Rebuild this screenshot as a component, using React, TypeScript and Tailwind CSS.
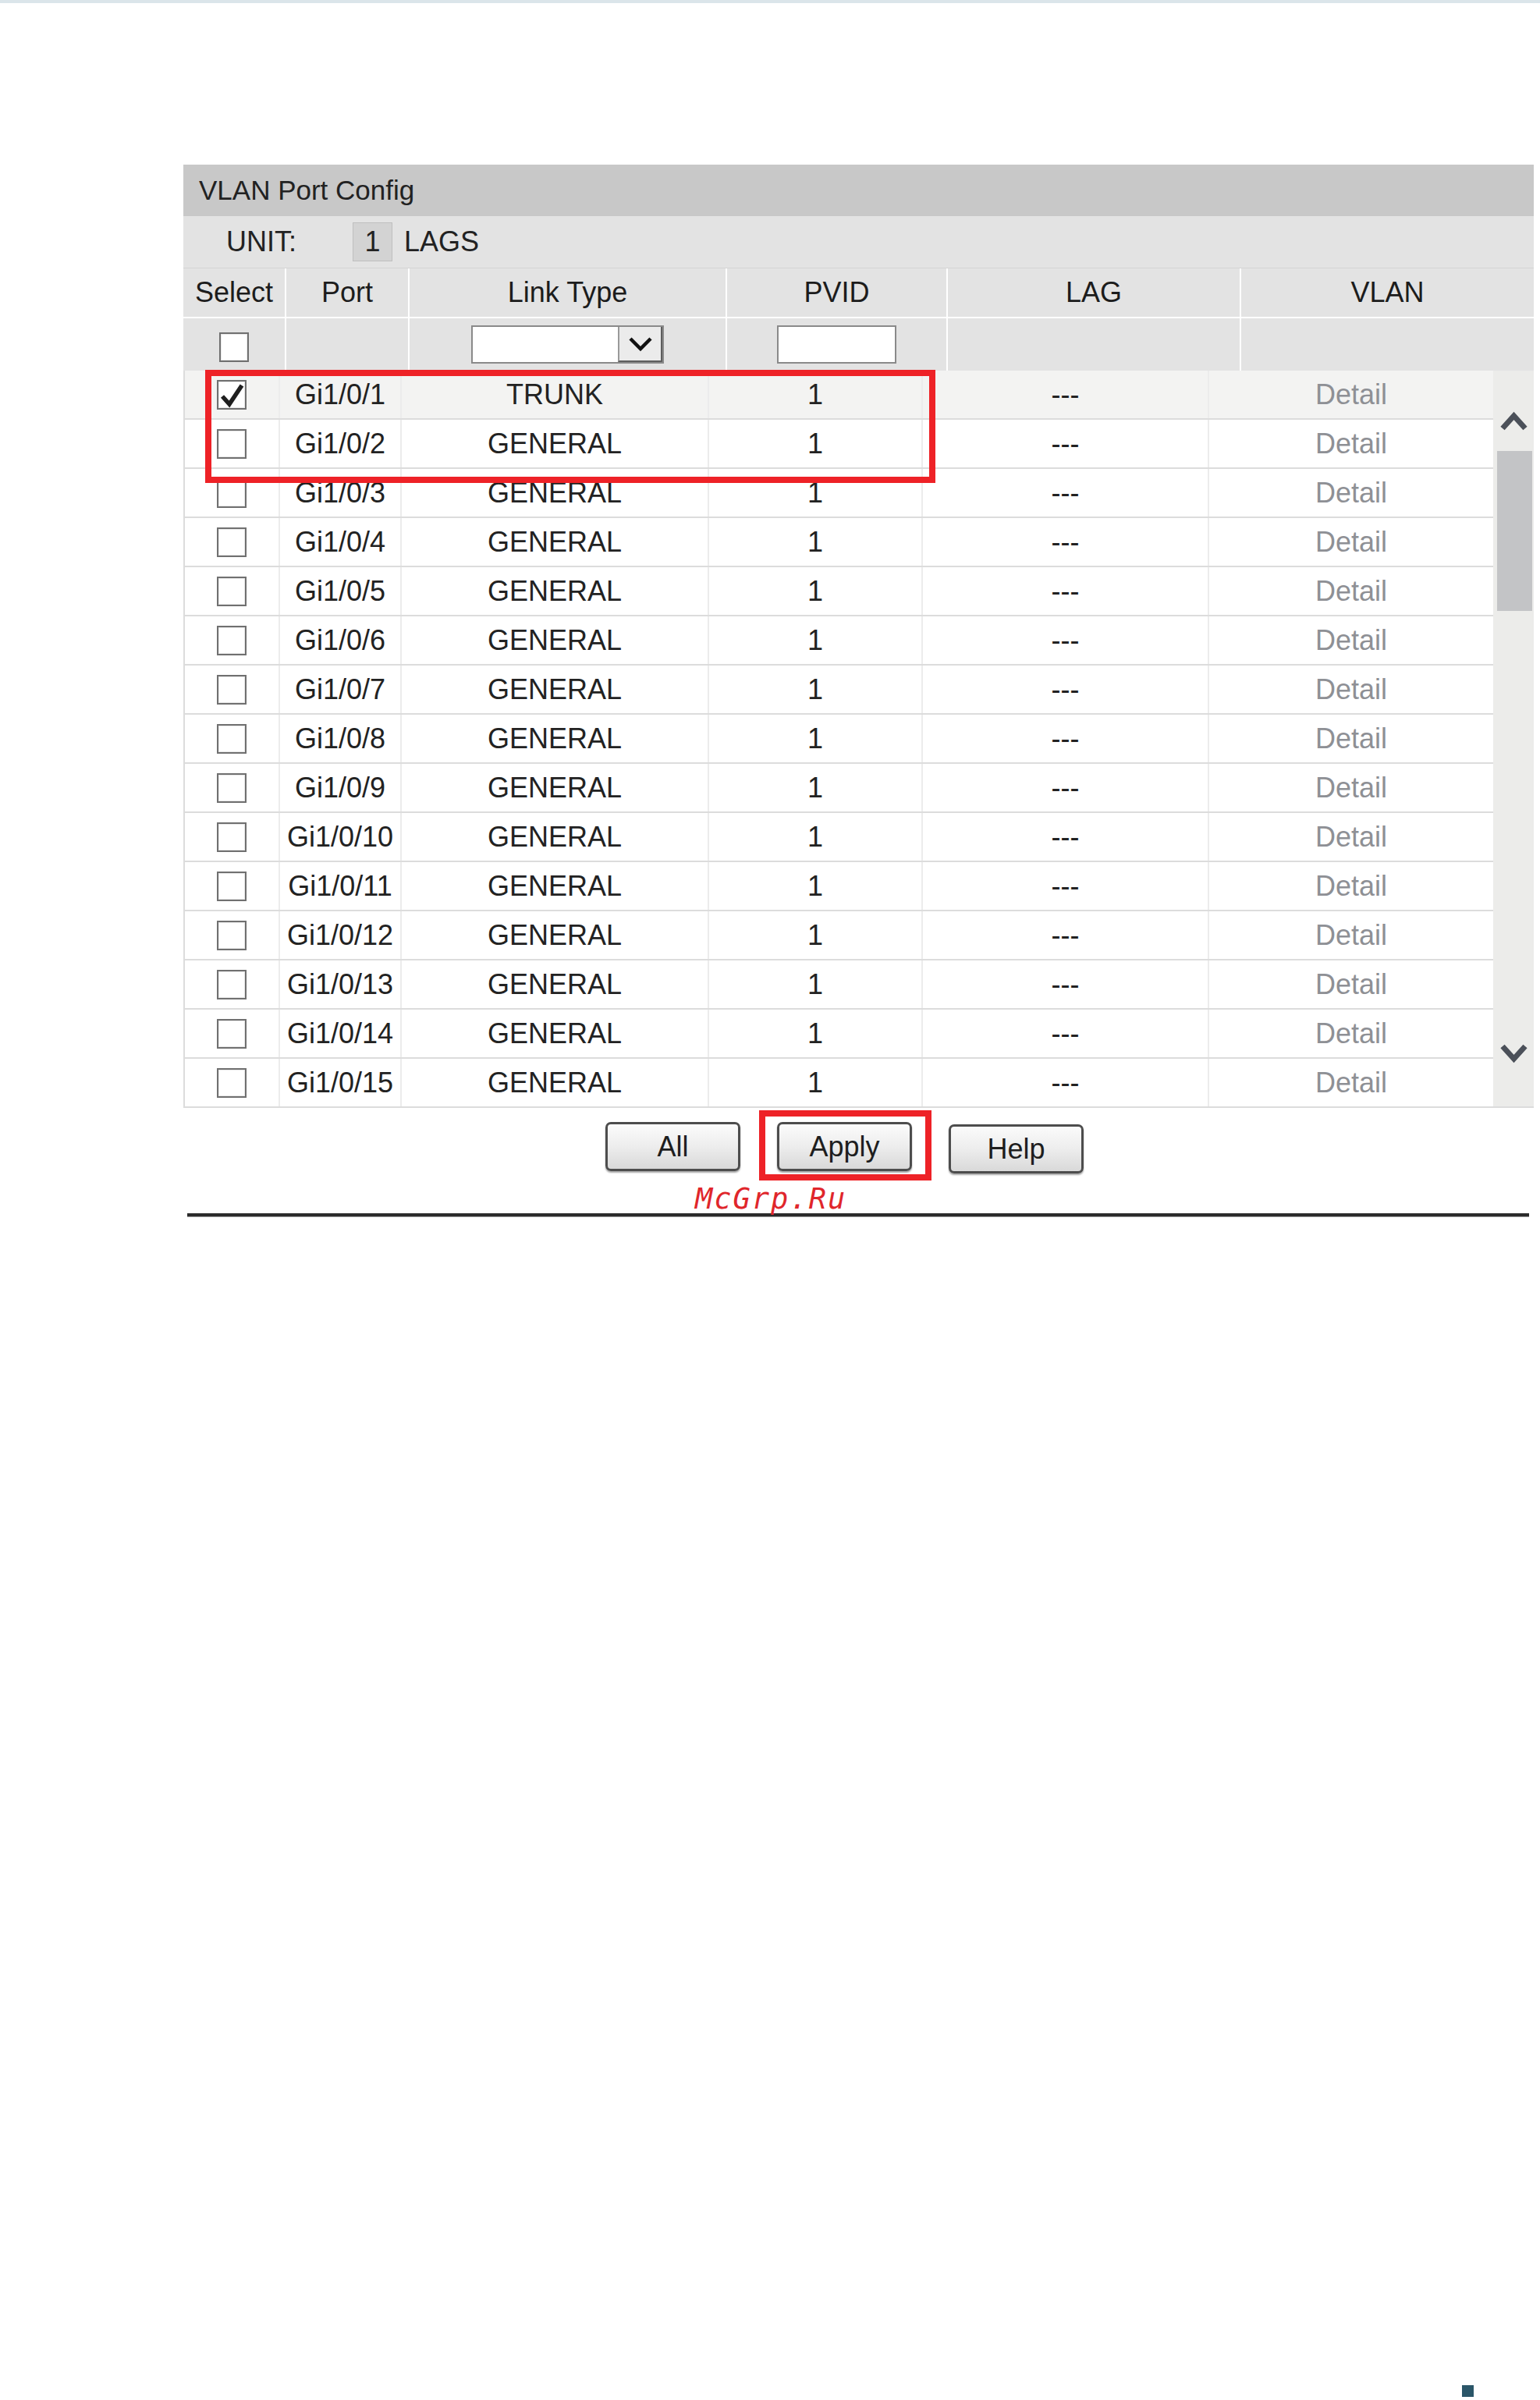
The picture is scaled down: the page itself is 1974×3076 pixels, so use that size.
import { ReactNode } from 'react'

type PortRow = {
  port: string
  linkType: string
  pvid: string
  checked?: boolean
}

const ports: PortRow[] = Array.from({ length: 15 }, (_, i) => ({
  port: `Gi1/0/${i + 1}`,
  linkType: i === 0 ? 'TRUNK' : 'GENERAL',
  pvid: '1',
  checked: i === 0,
}))

// column widths for the header (full width) and the body (minus scrollbar)
const headWidths = ['w-[130px]', 'w-[158px]', 'w-[407px]', 'w-[283px]', 'w-[376px]', 'w-[377px]']
const bodyWidths = ['w-[124px]', 'w-[156px]', 'w-[394px]', 'w-[274px]', 'w-[367px]', 'w-[364px]']

function Checkbox({ checked }: { checked?: boolean }) {
  return (
    <div className="relative w-[38px] h-[38px] border-2 border-[#707070] bg-white shadow-[inset_0_0_0_1px_#e8e8e8]">
      {checked && (
        <svg className="absolute -left-[1px] -top-[3px]" width="38" height="40" viewBox="0 0 38 40">
          <path d="M6 22 L15 32 L31 8" fill="none" stroke="#1f1f1f" strokeWidth="5.5" strokeLinejoin="miter" />
        </svg>
      )}
    </div>
  )
}

function Chevron({ down }: { down?: boolean }) {
  return (
    <svg width="35" height="26" viewBox="0 0 35 26">
      <path
        d={down ? 'M3 4 L17.5 20 L32 4' : 'M3 22 L17.5 6 L32 22'}
        fill="none"
        stroke="#4b5059"
        strokeWidth="7"
      />
    </svg>
  )
}

function HeadCell({ i, children }: { i: number; children?: ReactNode }) {
  return (
    <div
      className={`${headWidths[i]} h-full flex items-center justify-center ${i > 0 ? 'border-l-2 border-white' : ''}`}
    >
      {children}
    </div>
  )
}

function Button({ label }: { label: string }) {
  return (
    <button className="w-[173px] h-[63px] rounded-[7px] border-[3px] border-[#4d4d4d] bg-gradient-to-b from-[#fbfbfb] via-[#ededed] to-[#d9d9d9] shadow-[0_2px_2px_rgba(0,0,0,0.35)] text-[36px] text-[#1e1e1e] leading-none">
      {label}
    </button>
  )
}

export default function App() {
  return (
    <div className="relative w-[1974px] h-[3076px] bg-white font-['Liberation_Sans',Arial,sans-serif] text-[#222]">
      <div className="h-[4px] bg-[#dbe5ea]" />

      <div className="ml-[235px] mt-[207px] w-[1731px]">
        {/* panel title */}
        <div className="h-[66px] bg-[#c8c8c8] flex items-center pl-[20px] text-[35px]">VLAN Port Config</div>

        {/* unit selector */}
        <div className="h-[67px] bg-[#e3e3e3] border-b border-[#d4d4d4] flex items-center text-[36px]">
          <span className="ml-[55px] w-[162px]">UNIT:</span>
          <span className="w-[51px] h-[50px] flex items-center justify-center bg-[#d3d3d3] border border-[#bfbfbf]">1</span>
          <span className="ml-[15px]">LAGS</span>
        </div>

        {/* column headers */}
        <div className="h-[64px] bg-[#e3e3e3] flex text-[36px] text-[#1c1c1c] border-b-2 border-white">
          <HeadCell i={0}>Select</HeadCell>
          <HeadCell i={1}>Port</HeadCell>
          <HeadCell i={2}>Link Type</HeadCell>
          <HeadCell i={3}>PVID</HeadCell>
          <HeadCell i={4}>LAG</HeadCell>
          <HeadCell i={5}>VLAN</HeadCell>
        </div>

        {/* filter row */}
        <div className="h-[67px] bg-[#e3e3e3] flex">
          <HeadCell i={0}>
            <div className="mt-[6px]">
              <Checkbox />
            </div>
          </HeadCell>
          <HeadCell i={1} />
          <HeadCell i={2}>
            <div className="w-[247px] h-[49px] flex border-2 border-[#8a8a8a] bg-white">
              <div className="flex-1" />
              <div className="w-[57px] h-full flex items-center justify-center bg-[#ebebeb] border-l-2 border-[#9a9a9a] border-r-2 border-b-2 border-r-[#5e5e5e] border-b-[#5e5e5e]">
                <svg width="30" height="20" viewBox="0 0 30 20">
                  <path d="M2 3 L15 16 L28 3" fill="none" stroke="#111" strokeWidth="4.5" />
                </svg>
              </div>
            </div>
          </HeadCell>
          <HeadCell i={3}>
            <div className="w-[153px] h-[49px] border-2 border-[#8a8a8a] bg-white" />
          </HeadCell>
          <HeadCell i={4} />
          <HeadCell i={5} />
        </div>

        {/* port rows with scrollbar */}
        <div className="relative flex">
          <div className="flex flex-col">
            {ports.map((row) => (
              <div
                key={row.port}
                className={`flex h-[63px] border-b-2 border-[#dcdcdc] text-[36px] ${row.checked ? 'bg-[#f3f3f2]' : 'bg-white'}`}
              >
                <div className={`${bodyWidths[0]} border-l-2 border-r-2 border-[#dcdcdc] border-r-[#ececec] flex items-center justify-center`}>
                  <Checkbox checked={row.checked} />
                </div>
                <div className={`${bodyWidths[1]} border-r-2 border-[#ececec] flex items-center justify-center`}>{row.port}</div>
                <div className={`${bodyWidths[2]} border-r-2 border-[#ececec] flex items-center justify-center`}>{row.linkType}</div>
                <div className={`${bodyWidths[3]} border-r-2 border-[#ececec] flex items-center justify-center`}>{row.pvid}</div>
                <div className={`${bodyWidths[4]} border-r-2 border-[#ececec] flex items-center justify-center`}>---</div>
                <div className={`${bodyWidths[5]} flex items-center justify-center text-[#8e9095]`}>Detail</div>
              </div>
            ))}
          </div>

          <div className="w-[52px] bg-[#ececea] border-b-2 border-[#dcdcdc] flex flex-col items-center">
            <div className="mt-[52px]">
              <Chevron />
            </div>
            <div className="mt-[25px] w-[45px] ml-[3px] h-[205px] bg-[#c3c4c6]" />
            <div className="mt-auto mb-[55px]">
              <Chevron down />
            </div>
          </div>

          {/* highlight around the first two ports */}
          <div className="absolute left-[28px] -top-[1px] w-[936px] h-[145px] border-[8px] border-[#ee2227]" />
        </div>

        {/* actions */}
        <div className="relative flex gap-[47px] pl-[541px] mt-[18px]">
          <Button label="All" />
          <div className="relative">
            <Button label="Apply" />
            <div className="absolute -left-[23px] -top-[15px] w-[221px] h-[90px] border-[8px] border-[#ee2227]" />
          </div>
          <div className="mt-[3px]">
            <Button label="Help" />
          </div>
          <span className="absolute left-[656px] top-[80px] text-[37px] leading-none italic tracking-[2px] text-[#e0262b] font-['DejaVu_Sans_Mono',monospace]">
            McGrp.Ru
          </span>
        </div>

        <div className="ml-[5px] mt-[51px] w-[1720px] h-[5px] bg-[#2b2b2b] border-b border-[#9a9a9a]" />
      </div>

      <div className="absolute left-[1874px] top-[3057px] w-[15px] h-[15px] bg-[#2b5668]" />
    </div>
  )
}
